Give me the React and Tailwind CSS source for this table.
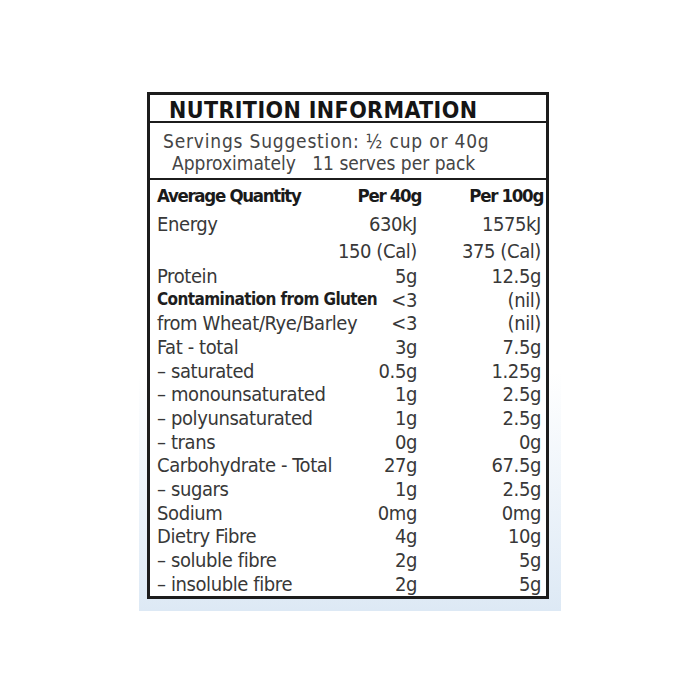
import React from "react";

const rows = [
  { l: "Energy", a: "630kJ", b: "1575kJ", h: "h-[29px]" },
  { l: "", a: "150 (Cal)", b: "375 (Cal)", h: "h-[26px]" },
  { l: "Protein", a: "5g", b: "12.5g" },
  { l: "Contamination from Gluten", a: "<3", b: "(nil)", bold: true },
  { l: "from Wheat/Rye/Barley", a: "<3", b: "(nil)" },
  { l: "Fat - total", a: "3g", b: "7.5g" },
  { l: "– saturated", a: "0.5g", b: "1.25g" },
  { l: "– monounsaturated", a: "1g", b: "2.5g" },
  { l: "– polyunsaturated", a: "1g", b: "2.5g" },
  { l: "– trans", a: "0g", b: "0g" },
  { l: "Carbohydrate - Total", a: "27g", b: "67.5g" },
  { l: "– sugars", a: "1g", b: "2.5g" },
  { l: "Sodium", a: "0mg", b: "0mg" },
  { l: "Dietry Fibre", a: "4g", b: "10g" },
  { l: "– soluble fibre", a: "2g", b: "5g" },
  { l: "– insoluble fibre", a: "2g", b: "5g" },
];

const font = {
  fontFamily: '"DejaVu Sans Condensed", "Liberation Sans", sans-serif',
};

export default function App() {
  return (
    <div className="w-[700px] h-[700px] bg-white pt-[80px] pl-[139px]" style={font}>
      <div className="w-[422px] pt-[12px] pb-[12px] pl-[8px] pr-[12px] bg-linear-to-b from-white from-55% to-[#dde9f5]">
        <div className="w-[402px] border-[3px] border-[#1c1c1c] bg-white text-[#383838]">
          <div className="h-[28px] border-b-2 border-[#1c1c1c] pl-[19px] pt-[5px] flex items-center">
            <span className="text-[23px] font-bold tracking-[0.4px] text-[#151515] leading-none whitespace-nowrap">
              NUTRITION INFORMATION
            </span>
          </div>
          <div className="h-[57px] border-b-2 border-[#1c1c1c] pt-[3px] flex flex-col justify-center text-[19px] leading-[22px] text-[#454545] whitespace-nowrap">
            <div className="pl-[13px] tracking-[0.8px]">Servings Suggestion: ½ cup or 40g</div>
            <div className="pl-[22px] whitespace-pre">Approximately   11 serves per pack</div>
          </div>
          <div className="pt-[3px] pl-[7px] pr-[3px] text-[20px] tracking-[-0.4px] whitespace-nowrap">
            <div className="h-[26px] grid grid-cols-[minmax(0,1fr)_120px_122px] items-center font-bold text-[18.5px] text-[#1a1a1a] tracking-[-1.3px] leading-none">
              <div>Average Quantity</div>
              <div className="text-right">Per 40g</div>
              <div className="text-right">Per 100g</div>
            </div>
            {rows.map((r, i) => (
              <div
                key={i}
                className={`${r.h || "h-[23.7px]"} grid grid-cols-[minmax(0,1fr)_120px_122px] items-center leading-none`}
              >
                <div className={r.bold ? "font-bold text-[17px] text-[#1e1e1e] tracking-[-0.6px]" : ""}>{r.l}</div>
                <div className="text-right pr-[4px]">{r.a}</div>
                <div className="text-right pr-[2px]">{r.b}</div>
              </div>
            ))}
          </div>
        </div>
      </div>
    </div>
  );
}
